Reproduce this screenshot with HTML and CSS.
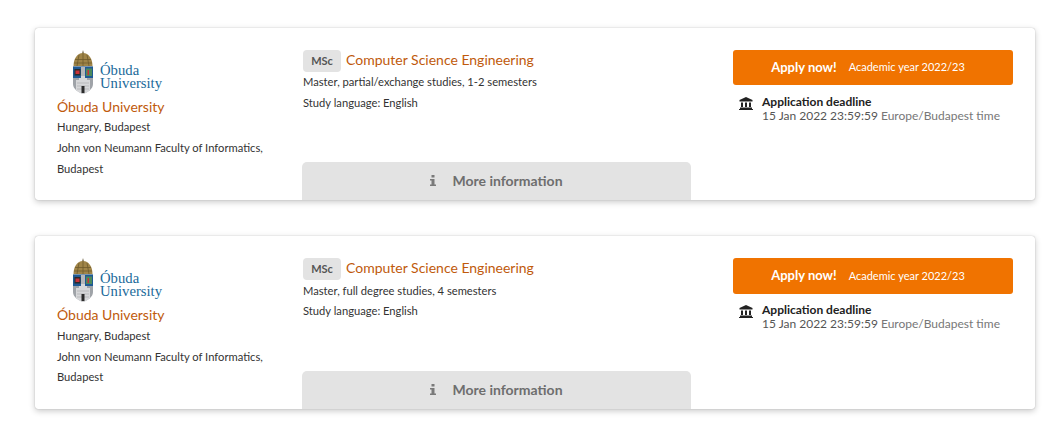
FILE: index.html
```html
<!DOCTYPE html>
<html lang="en">
<head>
    <meta charset="UTF-8">
    <meta name="viewport" content="width=device-width, initial-scale=1.0">
    <title>Programmes</title>
    <link rel="stylesheet" href="styles.css">
</head>
<body>
    <svg class="defs" width="0" height="0">
        <symbol id="crest" viewBox="0 0 22 44">
            <path d="M11 0l1 3h-2z" fill="#8a8067"/>
            <path d="M1.500 16c0-7 3.500-13 9.500-13s9.500 6 9.500 13z" fill="#a08548"/>
            <path d="M3 9.500h16M2 13h18M11 3v13M7 5l-2 11M15 5l2 11" stroke="#6e5a2c" stroke-width=".8" fill="none"/>
            <path d="M1 16.500h20V34c0 5-5 8-10 10C6 42 1 39 1 34z" fill="#9fa3a8"/>
            <path d="M1 16.500h20V28H1z" fill="#1f5a94"/>
            <path d="M2.500 19h6v6.500h-6z" fill="#2b2b2b"/>
            <path d="M3.500 20.500h4v3.500h-4z" fill="#c8323a"/>
            <path d="M14 18.500h6v7.500h-6z" fill="#4c8a5c"/>
            <path d="M15.500 20h1.500v5h-1.500z" fill="#c8323a"/>
            <path d="M9 17h4v11H9z" fill="#b5b7ba"/>
            <path d="M4 30h3v-2h2v-2h4v2h2v2h3v10c-2 2-4 3-7 4-3-1-5-2-7-4z" fill="#d6d7d9"/>
            <path d="M5 33h12M5 36h12M5 39h12" stroke="#a4a6a9" stroke-width=".6"/>
            <path d="M9.500 36h3v7h-3z" fill="#2b2b2b"/>
        </symbol>
    </svg>
    <div class="card">
        <div class="school">
            <svg class="school__logo" width="108" height="44" viewBox="0 0 108 44">
                <use href="#crest" width="22" height="44"/>
                <text class="logo-text" x="28" y="25">Óbuda</text>
                <text class="logo-text" x="28" y="38">University</text>
            </svg>
            <a class="school__name">Óbuda University</a>
            <p class="school__line">Hungary, Budapest</p>
            <p class="school__line">John von Neumann Faculty of Informatics, Budapest</p>
        </div>
        <div class="course">
            <div class="course__head">
                <span class="course__badge">MSc</span>
                <a class="course__title">Computer Science Engineering</a>
            </div>
            <p class="course__line">Master, partial/exchange studies, 1-2 semesters</p>
            <p class="course__line">Study language: English</p>
            <button class="course__more">
                <svg class="course__more-icon" width="6" height="11" viewBox="0 0 6 11"><path d="M1.500 0h3v2.500h-3zM0 4h4.500v5.500H6V11H0V9.500h1.500v-4H0z" fill="#7a7a7a"/></svg>
                More information
            </button>
        </div>
        <div class="apply">
            <button class="apply__button"><b>Apply now!</b><span>Academic year 2022/23</span></button>
            <div class="deadline">
                <svg class="deadline__icon" width="14" height="13" viewBox="0 0 14 13"><path d="M7 0L.5 3v1.500h13V3zM2 5.500h2v4.500H2zM6 5.500h2v4.500H6zM10 5.500h2v4.500h-2zM1 10.500h12V12H1zM0 12h14v1H0z" fill="#222"/></svg>
                <div>
                    <div class="deadline__title">Application deadline</div>
                    <div class="deadline__date">15 Jan 2022 23:59:59 <span>Europe/Budapest time</span></div>
                </div>
            </div>
        </div>
    </div>
    <div class="card">
        <div class="school">
            <svg class="school__logo" width="108" height="44" viewBox="0 0 108 44">
                <use href="#crest" width="22" height="44"/>
                <text class="logo-text" x="28" y="25">Óbuda</text>
                <text class="logo-text" x="28" y="38">University</text>
            </svg>
            <a class="school__name">Óbuda University</a>
            <p class="school__line">Hungary, Budapest</p>
            <p class="school__line">John von Neumann Faculty of Informatics, Budapest</p>
        </div>
        <div class="course">
            <div class="course__head">
                <span class="course__badge">MSc</span>
                <a class="course__title">Computer Science Engineering</a>
            </div>
            <p class="course__line">Master, full degree studies, 4 semesters</p>
            <p class="course__line">Study language: English</p>
            <button class="course__more">
                <svg class="course__more-icon" width="6" height="11" viewBox="0 0 6 11"><path d="M1.500 0h3v2.500h-3zM0 4h4.500v5.500H6V11H0V9.500h1.500v-4H0z" fill="#7a7a7a"/></svg>
                More information
            </button>
        </div>
        <div class="apply">
            <button class="apply__button"><b>Apply now!</b><span>Academic year 2022/23</span></button>
            <div class="deadline">
                <svg class="deadline__icon" width="14" height="13" viewBox="0 0 14 13"><path d="M7 0L.5 3v1.500h13V3zM2 5.500h2v4.500H2zM6 5.500h2v4.500H6zM10 5.500h2v4.500h-2zM1 10.500h12V12H1zM0 12h14v1H0z" fill="#222"/></svg>
                <div>
                    <div class="deadline__title">Application deadline</div>
                    <div class="deadline__date">15 Jan 2022 23:59:59 <span>Europe/Budapest time</span></div>
                </div>
            </div>
        </div>
    </div>
</body>
</html>
```

FILE: styles.css
```css
body {
    margin: 0;
    padding: 27.800px 27px 22px 35px;
    background-color: #fff;
    font-family: Lato, sans-serif;
    color: #333;
}

.defs {
    display: block;
}

.card {
    display: grid;
    grid-template-columns: 246px 388px 1fr;
    height: 172.400px;
    margin-bottom: 36px;
    padding-left: 22px;
    box-sizing: border-box;
    border-radius: 3px;
    background-color: #fff;
    box-shadow: 0 0 1px rgba(0,0,0,0.35), 0 2px 6px rgba(0,0,0,0.22);
}

.card:last-child {
    margin-bottom: 0;
}

.school {
    padding-top: 22px;
}

.school__logo {
    display: block;
    margin-left: 15px;
}

.logo-text {
    font-family: "Liberation Serif", serif;
    font-size: 14.700px;
    fill: #1a6a9a;
}

.school__name {
    display: block;
    margin-top: 3px;
    margin-bottom: 0.550px;
    font-size: 14px;
    line-height: 20px;
    color: #c05a0c;
}

.school__line {
    margin: 0;
    width: 220px;
    font-size: 11.200px;
    line-height: 20.800px;
}

.course {
    display: flex;
    flex-direction: column;
    padding-top: 22px;
}

.course__head {
    display: flex;
    align-items: center;
    gap: 5px;
    margin-bottom: 0.600px;
}

.course__badge {
    width: 38px;
    height: 22px;
    border-radius: 4px;
    background-color: #e3e3e3;
    color: #555;
    font-size: 11px;
    font-weight: bold;
    line-height: 22px;
    text-align: center;
}

.course__title {
    position: relative;
    top: -1.400px;
    font-size: 14px;
    color: #c05a0c;
}

.course__line {
    margin: 0;
    font-size: 11.200px;
    line-height: 20.600px;
}

.course__more {
    display: flex;
    justify-content: center;
    align-items: center;
    gap: 16px;
    margin-top: auto;
    margin-left: -1px;
    height: 38px;
    padding-bottom: 2px;
    border: none;
    border-radius: 5px 5px 0 0;
    background-color: #e3e3e3;
    color: #6e6e6e;
    font-family: inherit;
    font-size: 14px;
    font-weight: bold;
}

.apply {
    margin-left: 42px;
    padding-top: 22px;
    padding-right: 22px;
}

.apply__button {
    display: flex;
    justify-content: center;
    align-items: center;
    gap: 12px;
    width: 100%;
    height: 35.400px;
    padding: 0 10px 1px 0;
    border: none;
    border-radius: 3px;
    background-color: #f07300;
    color: #fff;
    font-family: inherit;
}

.apply__button b {
    font-size: 13px;
}

.apply__button span {
    font-size: 11px;
}

.deadline {
    display: flex;
    gap: 9px;
    margin-top: 9.600px;
    margin-left: 6px;
    font-size: 12px;
    line-height: 14px;
}

.deadline__icon {
    margin-top: 2px;
}

.deadline__title {
    font-weight: bold;
    color: #222;
}

.deadline__date {
    color: #555;
}

.deadline__date span {
    color: #777;
}
```
